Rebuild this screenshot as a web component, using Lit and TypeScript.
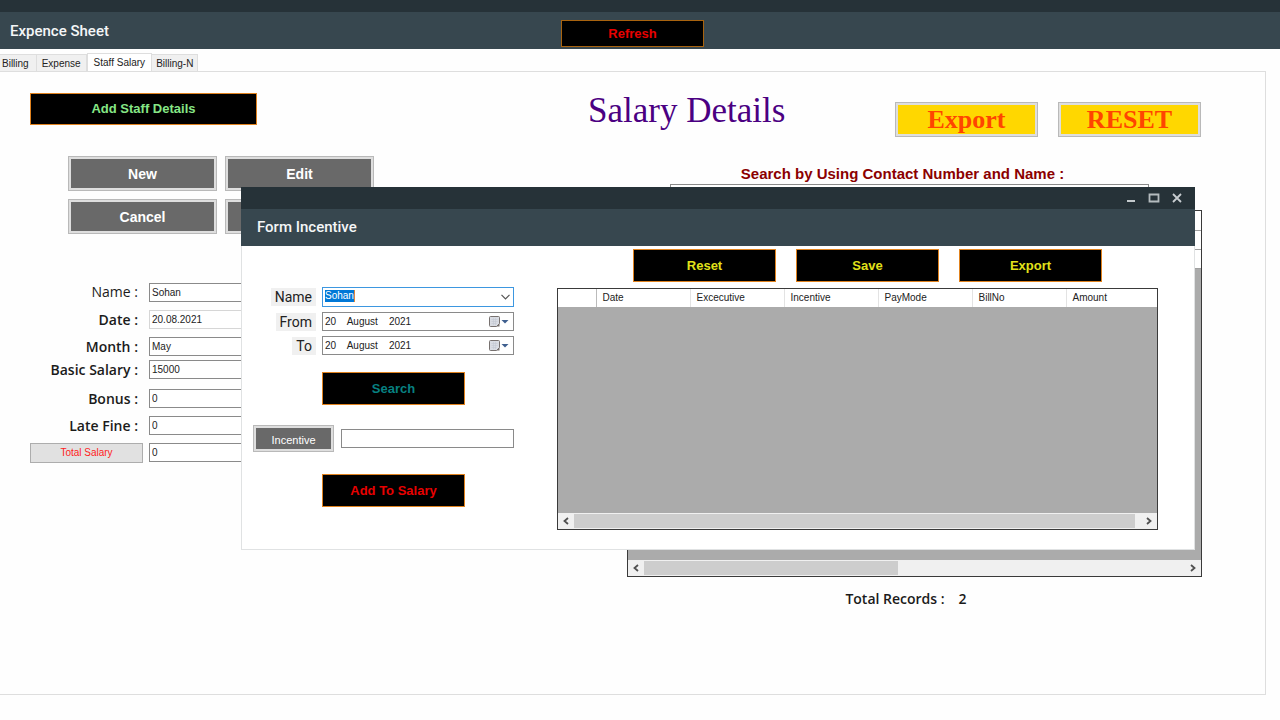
import { LitElement, html, css } from "lit";
import { customElement, property } from "lit/decorators.js";

/* Classic horizontal scroll bar with arrow buttons and a thumb sized from data. */
@customElement("scroll-strip")
class ScrollStrip extends LitElement {
  @property({ type: Number }) thumb = 50;

  static styles = css`
    :host {
      display: flex;
      height: 16px;
      background: #f0f0f0;
    }
    .arrow {
      display: flex;
      align-items: center;
      justify-content: center;
      width: 16px;
      padding: 0;
      border: 0;
      background: none;
    }
    .track {
      flex: 1;
      display: flex;
      padding: 1px 0;
    }
    .thumb {
      background: #cdcdcd;
    }
  `;

  render() {
    return html`
      <button class="arrow" aria-label="Scroll left">
        <svg width="8" height="8" viewBox="0 0 8 8" fill="none" stroke="#505050" stroke-width="1.8"><path d="M6 1 2.5 4 6 7" /></svg>
      </button>
      <div class="track"><div class="thumb" style="width:${this.thumb}%"></div></div>
      <button class="arrow" aria-label="Scroll right">
        <svg width="8" height="8" viewBox="0 0 8 8" fill="none" stroke="#505050" stroke-width="1.8"><path d="M2 1 5.500 4 2 7" /></svg>
      </button>
    `;
  }
}

const controls = css`
  * {
    box-sizing: border-box;
  }
  button,
  input,
  select {
    margin: 0;
    font: 10px/14px "Liberation Sans", sans-serif;
    color: #222;
    border-radius: 0;
  }
  input {
    min-width: 0;
    width: 100%;
    height: 19px;
    padding: 0 2px 1px;
    border: 1px solid #8a8a8a;
    background: #fff;
    outline: none;
  }
  .dark {
    width: 143px;
    height: 33px;
    padding: 0;
    border: 1px solid #e0821e;
    background: #000;
    font: bold 13px/16px "Liberation Sans", sans-serif;
  }
  .grey {
    border: 1px solid #b9b9b9;
    padding: 0;
    background: #696969;
    box-shadow: inset 0 0 0 2px #dedede;
    color: #fff;
    font: bold 14px/16px "Liberation Sans", sans-serif;
  }
  .red {
    color: #e80000;
  }
  .grid-box {
    display: flex;
    flex-direction: column;
    border: 1px solid #3a3a3a;
    background: #ababab;
  }
  .space {
    flex: 1;
  }
  table {
    width: 100%;
    table-layout: fixed;
    border-collapse: collapse;
    background: #fff;
    font: 10px/14px "Liberation Sans", sans-serif;
    color: #222;
  }
  .bar {
    background: #263238;
  }
  .title {
    display: flex;
    align-items: center;
    height: 37px;
    background: #37474f;
    color: #f4f6f7;
    font: 500 15px/20px Roboto, sans-serif;
  }
`;

@customElement("incentive-window")
class IncentiveWindow extends LitElement {
  static styles = [
    controls,
    css`
      :host {
        display: block;
        background: #fff;
      }
      .bar {
        display: flex;
        justify-content: flex-end;
        height: 22px;
        padding-right: 7px;
      }
      .win {
        display: flex;
        align-items: center;
        justify-content: center;
        width: 23px;
        padding: 0;
        border: 0;
        background: none;
      }
      .title {
        padding: 0 16px 2px;
      }
      .body {
        display: grid;
        grid-template-columns: 261px minmax(0, 1fr);
        column-gap: 43px;
        padding: 0 36px 19px 11px;
        border: 1px solid #e0e2e3;
        border-top: 0;
      }
      .fields {
        display: grid;
        grid-template-columns: 63px 1fr;
        gap: 5px 6px;
        align-items: center;
        padding-top: 41px;
      }
      .tag {
        justify-self: end;
        padding: 0 4px;
        background: #f0f0f0;
        color: #222;
        font: 400 14px/18px Roboto, sans-serif;
      }
      .combo,
      .date {
        display: flex;
        align-items: center;
        position: relative;
      }
      .combo select {
        appearance: none;
        width: 100%;
        height: 20px;
        padding: 0 2px 2px;
        border: 1px solid #3d97e0;
        outline: none;
        color: #fff;
        background: linear-gradient(#e08a3c, #e08a3c) 31px 2px / 1px 12px no-repeat,
          linear-gradient(#0078d7, #0078d7) 2px 2px / 30px 12px no-repeat, #fff;
      }
      .combo svg {
        position: absolute;
        right: 4px;
        pointer-events: none;
      }
      .pick {
        position: absolute;
        right: 5px;
        display: flex;
        padding: 0;
        border: 0;
        background: none;
      }
      .shift {
        padding-left: 69px;
      }
      .search {
        margin-top: 17px;
        color: #078080;
      }
      .amount {
        display: grid;
        grid-template-columns: 81px 1fr;
        gap: 7px;
        align-items: center;
        margin: 20px 0 22px;
      }
      .amount .grey {
        height: 27px;
        padding-top: 2px;
        font: 11px/16px "Liberation Sans", sans-serif;
      }
      .actions {
        display: flex;
        gap: 20px;
        padding: 3px 0 6px 76px;
      }
      .actions .dark {
        color: #e2e21a;
      }
      .grid-box {
        height: 242px;
      }
      th {
        height: 18px;
        padding: 0 6px;
        border-right: 1px solid #e3e3e3;
        font-weight: normal;
        text-align: left;
        width: 94px;
      }
      th.stub {
        width: 38px;
        border-color: #bbb;
      }
      th.rest {
        width: auto;
        border: 0;
      }
    `,
  ];

  private columns = ["Date", "Excecutive", "Incentive", "PayMode", "BillNo"];

  private dateField(id: string, label: string) {
    return html`
      <label class="tag" for=${id}>${label}</label>
      <span class="date">
        <input id=${id} type="text" value="20    August    2021" />
        <button class="pick" aria-label="Open calendar">
          <svg width="20" height="11" viewBox="0 0 20 11">
            <path d="M.5 1.500q0-1 1-1h8q1 0 1 1v6l-3 3h-6q-1 0-1-1z" fill="#d9dce3" stroke="#77716f" />
            <path d="M2.500 3.500h6M2.500 5.500h6M2.500 7.500h5M4.500 2v7M6.500 2v7" stroke="#c3c7d2" stroke-width=".6" />
            <path d="M7.500 10.500l3-3v3z" fill="#77716f" />
            <path d="M12.500 4h7L16 7.500z" fill="#3f5f8f" />
          </svg>
        </button>
      </span>
    `;
  }

  render() {
    return html`
      <div class="bar">
        <button class="win" aria-label="Minimize">
          <svg width="12" height="12" viewBox="0 0 12 12" fill="none" stroke="#c3c9cc" stroke-width="2"><path d="M2 9h8" /></svg>
        </button>
        <button class="win" aria-label="Maximize">
          <svg width="12" height="12" viewBox="0 0 12 12" fill="none" stroke="#b4bbbe" stroke-width="1.800"><path d="M1.500 2.500h9v7h-9z" /></svg>
        </button>
        <button class="win" aria-label="Close">
          <svg width="12" height="12" viewBox="0 0 12 12" fill="none" stroke="#c9ced1" stroke-width="1.800"><path d="m2 2 8 8M10 2l-8 8" /></svg>
        </button>
      </div>
      <div class="title">Form Incentive</div>
      <div class="body">
        <form>
          <div class="fields">
            <label class="tag" for="who">Name</label>
            <span class="combo">
              <select id="who"><option>Sohan</option></select>
              <svg width="9" height="6" viewBox="0 0 9 6" fill="none" stroke="#555" stroke-width="1.200"><path d="m.5.800 4 4 4-4" /></svg>
            </span>
            ${this.dateField("from", "From")} ${this.dateField("to", "To")}
          </div>
          <div class="shift"><button type="button" class="dark search">Search</button></div>
          <div class="amount">
            <button type="button" class="grey">Incentive</button>
            <input type="text" aria-label="Incentive amount" />
          </div>
          <div class="shift"><button type="button" class="dark red">Add To Salary</button></div>
        </form>
        <div>
          <div class="actions">
            <button class="dark">Reset</button>
            <button class="dark">Save</button>
            <button class="dark">Export</button>
          </div>
          <div class="grid-box">
            <table>
              <tr>
                <th class="stub"></th>
                ${this.columns.map((c) => html`<th>${c}</th>`)}
                <th class="rest">Amount</th>
              </tr>
            </table>
            <div class="space"></div>
            <scroll-strip thumb="99"></scroll-strip>
          </div>
        </div>
      </div>
    `;
  }
}

@customElement("app-root")
class AppRoot extends LitElement {
  static styles = [
    controls,
    css`
      :host {
        display: flex;
        flex-direction: column;
        position: relative;
        min-height: 100vh;
        background: #fefefe;
      }
      .bar {
        height: 12px;
      }
      .title {
        display: grid;
        grid-template-columns: 1fr auto 1fr;
        padding: 0 25px 0 10px;
      }
      .title .dark {
        height: 27px;
        margin-top: 6px;
        border-color: #a8630f;
      }
      nav {
        display: flex;
        align-items: flex-end;
        height: 23px;
        margin-bottom: -1px;
      }
      .tab {
        height: 17px;
        margin-bottom: 1px;
        padding: 2px 4px 0;
        border: 1px solid #dedede;
        border-width: 1px 1px 0 0;
        background: #f0f0f0;
      }
      .tab.first {
        padding: 2px 7px 0 2px;
      }
      .tab.wide {
        padding: 2px 5px 0;
      }
      .tab.current {
        height: 19px;
        margin-bottom: 0;
        padding: 0 6px 1px;
        border-left-width: 1px;
        background: #fff;
      }
      .panel {
        flex: 1;
        display: grid;
        grid-template-columns: minmax(344px, 558px) minmax(0, 1fr);
        align-items: start;
        margin: 0 14px 25px 0;
        padding: 21px 64px 0 30px;
        border: 1px solid #dedede;
        border-left: 0;
      }
      .staff {
        width: 227px;
        height: 32px;
        color: #86e686;
      }
      .modes {
        display: grid;
        grid-template-columns: 149px 149px;
        grid-auto-rows: 35px;
        gap: 8px;
        margin: 31px 0 49px 38px;
      }
      .group {
        display: grid;
        grid-template-columns: 113px 225px;
        grid-auto-rows: 19px;
        gap: 8px 6px;
        align-items: center;
        margin-bottom: 4px;
      }
      .group.wide {
        margin-bottom: 10px;
      }
      .group label,
      .total {
        color: #1b1b1b;
        font: 600 14px/20px "Open Sans", sans-serif;
      }
      .group label {
        padding-right: 5px;
        text-align: right;
      }
      .group .plain {
        padding-bottom: 2px;
        font-weight: 400;
      }
      .group .faint {
        border-color: #d6d6d6;
      }
      .sum {
        height: 20px;
        padding: 0;
        border: 1px solid #adadad;
        background: #e1e1e1;
        color: #f22;
      }
      .head {
        display: flex;
        gap: 20px;
      }
      h1 {
        flex: 1;
        margin: 0;
        color: #4b0082;
        font: 35px/36px "Liberation Serif", serif;
      }
      .gold {
        width: 143px;
        height: 35px;
        margin-top: 9px;
        padding: 0;
        border: 1px solid #b9b9b9;
        box-shadow: inset 0 0 0 2px #dedede;
        background: #ffd700;
        color: #ff4500;
        font: bold 26px/28px "Liberation Serif", serif;
      }
      .records {
        padding-left: 39px;
      }
      .find {
        display: grid;
        gap: 1px;
        padding: 28px 52px 6px 43px;
      }
      .find label {
        padding-right: 14px;
        text-align: center;
        color: #8b0000;
        font: bold 15px/18px "Liberation Sans", sans-serif;
      }
      .find input {
        height: 20px;
      }
      .grid-box {
        height: 367px;
        margin-right: -1px;
      }
      td,
      th {
        height: 19px;
        padding: 0;
        border-bottom: 1px solid #a0a0a0;
      }
      .total {
        display: flex;
        justify-content: center;
        gap: 14px;
        padding: 12px 16px 0 0;
      }
      /* floating child window */
      .window {
        position: absolute;
        top: 187px;
        left: 241px;
        right: 85px;
      }
    `,
  ];

  private field(id: string, label: string, value: string, labelClass = "", inputClass = "") {
    return html`
      <label class=${labelClass} for=${id}>${label} :</label>
      <input id=${id} class=${inputClass} type="text" value=${value} />
    `;
  }

  render() {
    return html`
      <div class="bar"></div>
      <header class="title">
        <span>Expence Sheet</span>
        <button class="dark red">Refresh</button>
      </header>
      <nav>
        <button class="tab first">Billing</button>
        <button class="tab wide">Expense</button>
        <button class="tab current">Staff Salary</button>
        <button class="tab">Billing-N</button>
      </nav>
      <main class="panel">
        <section>
          <button class="dark staff">Add Staff Details</button>
          <div class="modes">
            <button class="grey">New</button>
            <button class="grey">Edit</button>
            <button class="grey">Cancel</button>
            <button class="grey" aria-label="Delete"></button>
          </div>
          <div class="group">
            ${this.field("name", "Name", "Sohan", "plain")} ${this.field("date", "Date", "20.08.2021", "", "faint")}
            ${this.field("month", "Month", "May")}
          </div>
          <div class="group wide">${this.field("basic", "Basic Salary", "15000")}</div>
          <div class="group">
            ${this.field("bonus", "Bonus", "0")} ${this.field("fine", "Late Fine", "0")}
            <button class="sum">Total Salary</button>
            <input type="text" aria-label="Total salary" value="0" />
          </div>
        </section>
        <section>
          <div class="head">
            <h1>Salary Details</h1>
            <button class="gold">Export</button>
            <button class="gold">RESET</button>
          </div>
          <div class="records">
            <div class="find">
              <label for="find">Search by Using Contact Number and Name :</label>
              <input id="find" type="text" />
            </div>
            <div class="grid-box">
              <table>
                <tr><th></th></tr>
                <tr><td></td></tr>
                <tr><td></td></tr>
              </table>
              <div class="space"></div>
              <scroll-strip thumb="47"></scroll-strip>
            </div>
            <div class="total"><span>Total Records :</span><span>2</span></div>
          </div>
        </section>
      </main>
      <incentive-window class="window" role="dialog" aria-label="Form Incentive"></incentive-window>
    `;
  }
}
